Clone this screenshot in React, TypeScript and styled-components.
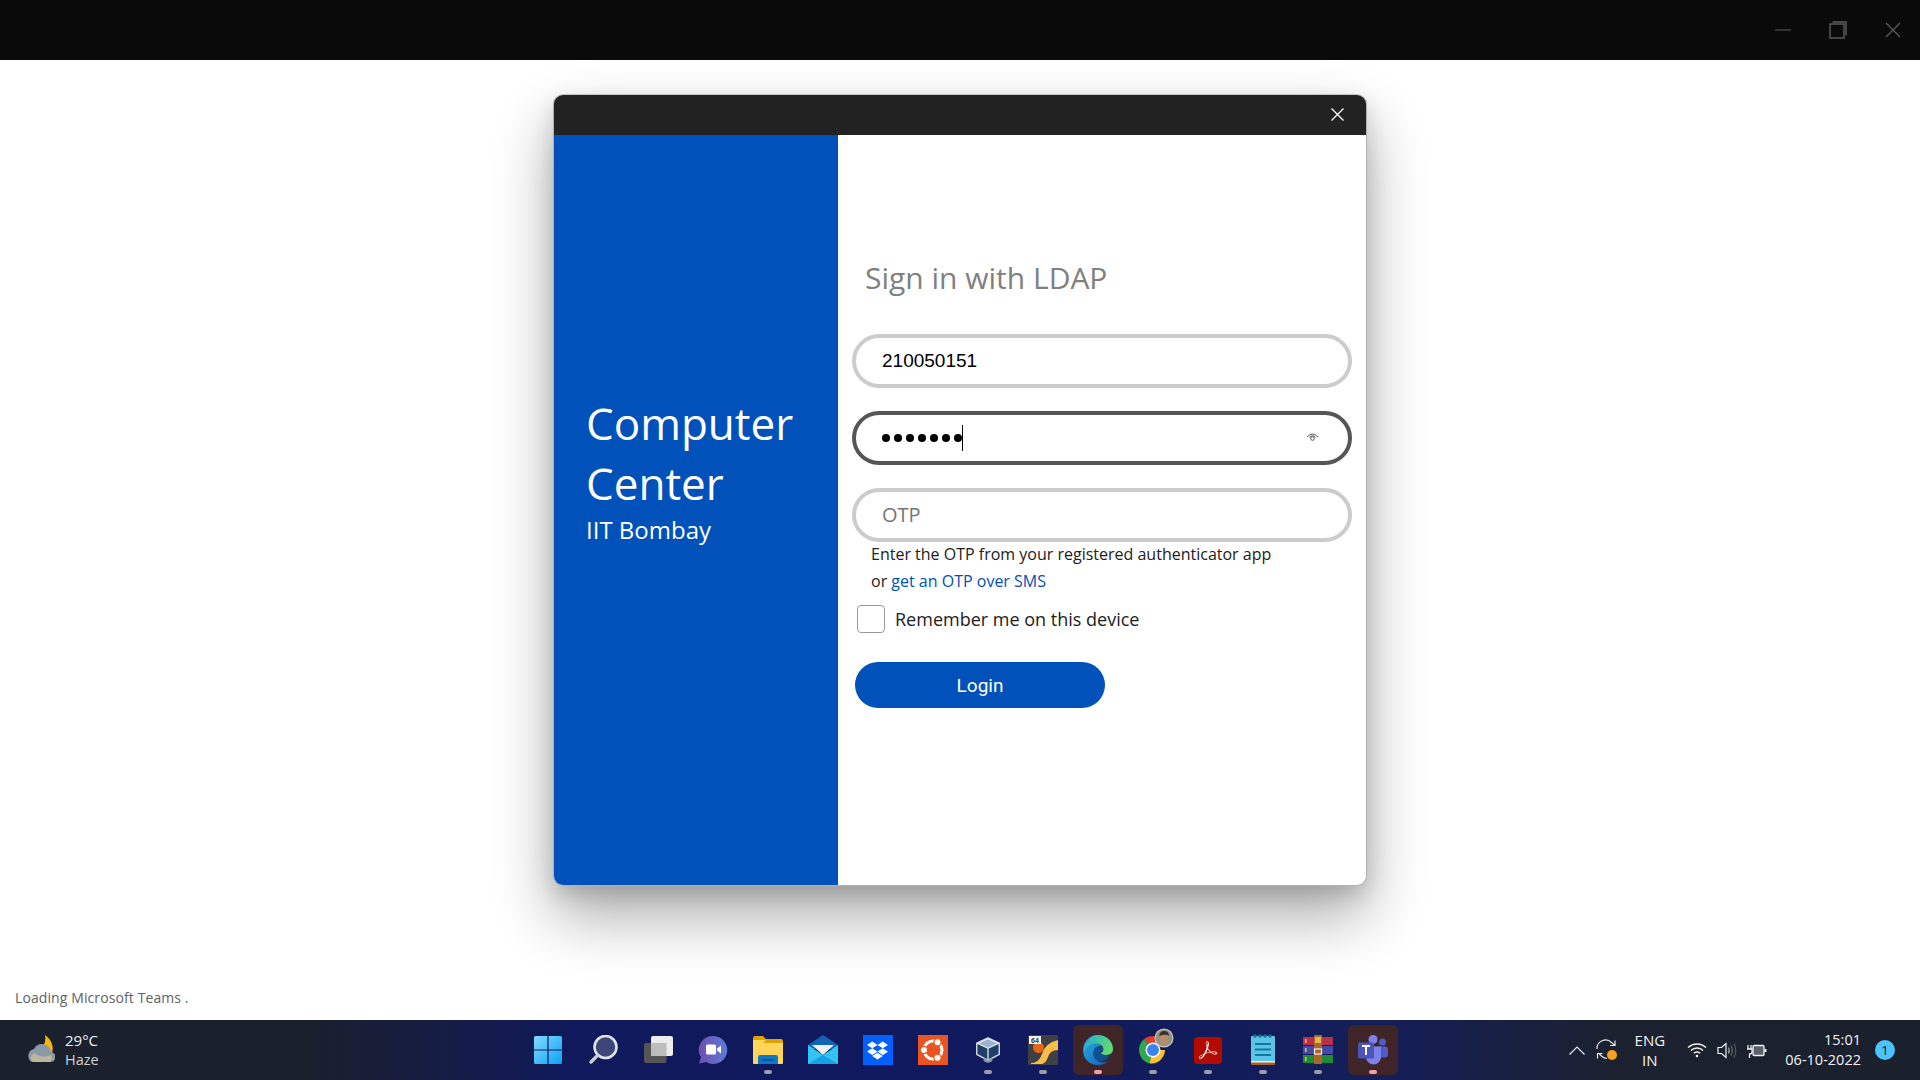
import styled, { createGlobalStyle } from 'styled-components';
import { FaDropbox } from 'react-icons/fa';
import { SiAdobeacrobatreader } from 'react-icons/si';

const GlobalStyle = createGlobalStyle`
  html, body, #root { margin: 0; padding: 0; height: 100%; }
  body { font-family: "Open Sans", "Liberation Sans", sans-serif; background: #fff; overflow: hidden; }
  * { box-sizing: border-box; }
`;

const Page = styled.div`
  width: 1920px;
  height: 1080px;
  display: flex;
  flex-direction: column;
`;

// Window chrome
const TitleBar = styled.div`
  height: 60px;
  flex: none;
  background: #0a0a0a;
  display: flex;
  justify-content: flex-end;
  align-items: center;
`;

const WinButton = styled.div`
  width: 55px;
  height: 60px;
  display: flex;
  align-items: center;
  justify-content: center;
  color: #5c5c5c;
`;

const Main = styled.main`
  flex: 1;
  display: flex;
  flex-direction: column;
  align-items: center;
  padding-top: 34px;
  background: #fff;
`;

// Modal
const Modal = styled.div`
  width: 814px;
  height: 792px;
  display: flex;
  flex-direction: column;
  border-radius: 10px;
  overflow: hidden;
  background: #fff;
  border: 1px solid #b0b0b0;
  border-top-color: #c8c8c8;
  box-shadow: 0 30px 60px rgba(0, 0, 0, 0.33), 0 8px 20px rgba(0, 0, 0, 0.14);
`;

const ModalHeader = styled.div`
  height: 40px;
  flex: none;
  background: #222;
  display: flex;
  justify-content: flex-end;
  align-items: center;
  padding: 0 22px 2px 0;
  color: #fff;
`;

const ModalBody = styled.div`
  flex: 1;
  display: flex;
`;

const BrandPanel = styled.aside`
  width: 284px;
  flex: none;
  background: #0051b9;
  color: #fff;
  padding: 258px 0 0 32px;
`;

const BrandTitle = styled.h1`
  margin: 0;
  font-size: 44px;
  font-weight: 400;
  line-height: 60px;
`;

const BrandSub = styled.div`
  font-size: 24px;
  line-height: 32px;
  margin-top: 1px;
`;

const FormPanel = styled.section`
  flex: 1;
  padding: 118px 14px 0 14px;
`;

const Heading = styled.h2`
  margin: 0 0 31px 13px;
  font-size: 30px;
  font-weight: 400;
  line-height: 50px;
  color: #808080;
`;

const Field = styled.div<{ $active?: boolean }>`
  width: 500px;
  height: 54px;
  border: 4px solid ${(p) => (p.$active ? '#555' : '#ccc')};
  border-radius: 27px;
  display: flex;
  align-items: center;
  justify-content: space-between;
  padding: 0 29px 0 26px;
  margin-bottom: 23px;
  font-family: "Liberation Sans", sans-serif;
  font-size: 19px;
  color: #000;
`;

const Placeholder = styled.span`
  font-family: "Open Sans", sans-serif;
  font-size: 20px;
  margin-top: -2px;
  color: #757575;
`;

const Dots = styled.span`
  display: flex;
  align-items: center;
  gap: 4px;
  height: 26px;
  border-right: 1px solid #000;
`;

const Dot = styled.i`
  width: 8px;
  height: 8px;
  border-radius: 50%;
  background: #000;
`;

const Help = styled.p`
  margin: -24px 0 0 19px;
  font-size: 16px;
  line-height: 27px;
  color: #212121;
`;

const HelpLink = styled.a`
  color: #0051b9;
  text-decoration: none;
`;

const RememberRow = styled.label`
  display: flex;
  align-items: center;
  gap: 10px;
  margin: 10px 0 0 5px;
  font-size: 18px;
  color: #212121;
`;

const CheckBox = styled.span`
  width: 28px;
  height: 28px;
  border: 1px solid #999;
  border-radius: 4px;
  background: #fff;
`;

const LoginButton = styled.button`
  display: block;
  width: 250px;
  height: 46px;
  margin: 29px 0 0 3px;
  border: none;
  border-radius: 23px;
  background: #0051b9;
  color: #fff;
  font-family: Roboto, sans-serif;
  font-size: 19px;
`;

const LoadingText = styled.div`
  align-self: flex-start;
  margin-top: auto;
  margin-left: 15px;
  margin-bottom: 12px;
  font-size: 14px;
  line-height: 20px;
  letter-spacing: 0.1px;
  color: #616161;
`;

// Taskbar
const Taskbar = styled.footer`
  height: 60px;
  flex: none;
  display: grid;
  grid-template-columns: 1fr auto 1fr;
  align-items: center;
  color: #fff;
  background: linear-gradient(90deg, #1b202d 0, #1b202d 16%, #10195c 30%, #10195e 50%, #141e58 72%, #1b212f 84%, #1b202d 100%);
`;

const Weather = styled.div`
  display: flex;
  align-items: center;
  gap: 10px;
  padding-left: 25px;
`;

const TwoLines = styled.div<{ $align?: string }>`
  display: flex;
  flex-direction: column;
  align-items: ${(p) => p.$align || 'flex-start'};
  font-size: 15px;
  line-height: 20px;
  color: #f2f2f2;
`;

const Clock = styled(TwoLines)`
  margin-left: 11px;
  font-size: 14.5px;
`;

const Muted = styled.span`
  font-size: 14.5px;
  color: #cfd1d5;
`;

const Apps = styled.div`
  display: flex;
  gap: 5px;
`;

const AppCell = styled.div<{ $open?: boolean }>`
  position: relative;
  width: 50px;
  height: 50px;
  border-radius: 6px;
  display: flex;
  align-items: center;
  justify-content: center;
  background: ${(p) => (p.$open ? '#402528' : 'transparent')};
`;

const Indicator = styled.span<{ $pink?: boolean }>`
  position: absolute;
  left: 21px;
  bottom: 1px;
  width: 8px;
  height: 4px;
  border-radius: 2px;
  background: ${(p) => (p.$pink ? '#f2a0aa' : '#9a9da8')};
`;

const DropboxTile = styled.div`
  width: 30px;
  height: 30px;
  background: #0061fe;
  color: #fff;
  display: flex;
  align-items: center;
  justify-content: center;
  font-size: 21px;
`;

const AcrobatTile = styled.div`
  width: 28px;
  height: 27px;
  border-radius: 4px;
  background: #b30b00;
  color: #fff;
  display: flex;
  align-items: center;
  justify-content: center;
  font-size: 18px;
`;

const Tray = styled.div`
  display: flex;
  justify-content: flex-end;
  align-items: center;
  padding-right: 25px;
`;

const TrayIcon = styled.div<{ $w: number }>`
  width: ${(p) => p.$w}px;
  display: flex;
  justify-content: center;
  align-items: center;
`;

const Badge = styled.div`
  width: 20px;
  height: 20px;
  margin-left: 14px;
  border-radius: 50%;
  background: #4cc2ff;
  color: #10202c;
  font-size: 13px;
  line-height: 20px;
  text-align: center;
`;

const ChromeSvg = styled.svg`
  overflow: visible;
`;

// Icons
const WinStart = () => (
  <svg width="30" height="30" viewBox="0 0 30 30">
    <defs>
      <linearGradient id="wg" x1="0" y1="0" x2="1" y2="1">
        <stop offset="0" stopColor="#7fdcff" />
        <stop offset="1" stopColor="#0f9ff5" />
      </linearGradient>
    </defs>
    <path fill="url(#wg)" d="M1 2.5Q1 1 2.5 1H14.4V14.4H1zM15.6 1H27.5Q29 1 29 2.5V14.4H15.6zM1 15.6H14.4V29H2.5Q1 29 1 27.5zM15.6 15.6H29V27.5Q29 29 27.5 29H15.6z" />
  </svg>
);

const SearchIcon = () => (
  <svg width="30" height="30" viewBox="0 0 30 30">
    <circle cx="17.5" cy="12" r="11" fill="#3d4678" stroke="#dfe3ea" strokeWidth="2.6" />
    <path d="M9.5 20.5 3 27" stroke="#c9ced8" strokeWidth="3.4" strokeLinecap="round" />
  </svg>
);

const TaskViewIcon = () => (
  <svg width="30" height="30" viewBox="0 0 30 30">
    <rect x="1" y="8" width="22.5" height="20" rx="2" fill="#555" />
    <rect x="8" y="1" width="22" height="20" rx="2" fill="#ececec" />
    <rect x="8" y="8" width="15.5" height="13" fill="#bdbdbd" />
  </svg>
);

const ChatIcon = () => (
  <svg width="30" height="30" viewBox="0 0 30 30">
    <defs>
      <linearGradient id="cg" x1="0" y1="0" x2="1" y2="0">
        <stop offset="0" stopColor="#6d4fb0" />
        <stop offset="1" stopColor="#5d7bd8" />
      </linearGradient>
    </defs>
    <path fill="url(#cg)" d="M15.5 1A14 14 0 1 1 8 27L1.5 28.5Q1 26 3 22.5A14 14 0 0 1 15.5 1Z" />
    <rect x="8" y="9.5" width="10" height="10" rx="1.5" fill="#fff" />
    <path d="M19 13.5 23 10.5V18.5L19 15.5Z" fill="#fff" />
  </svg>
);

const ExplorerIcon = () => (
  <svg width="30" height="30" viewBox="0 0 30 30">
    <path d="M0 3Q0 1 2 1H10L13 4H28Q30 4 30 6V12H0Z" fill="#dfa200" />
    <path d="M0 5H13L10 8H30V28Q30 29 29 29H1Q0 29 0 28Z" fill="#ffd659" />
    <path d="M5 29V22Q5 20 7 20H23Q25 20 25 22V29Z" fill="#0d78c8" />
    <rect x="9" y="24" width="12" height="1.6" fill="#0a4f8f" />
  </svg>
);

const MailIcon = () => (
  <svg width="30" height="30" viewBox="0 0 30 30">
    <path d="M0 10 15 0 30 10V14H0Z" fill="#0f64b5" />
    <path d="M4 10H26L15 20Z" fill="#f0f0f0" />
    <path d="M0 10 15 20 30 10V29H0Z" fill="#32c5f4" />
    <path d="M0 29 15 20 30 29Z" fill="#17a0e4" />
  </svg>
);

const UbuntuIcon = () => (
  <svg width="30" height="30" viewBox="0 0 30 30">
    <rect width="30" height="30" fill="#e95420" />
    <circle cx="15" cy="15" r="9" fill="none" stroke="#fff" strokeWidth="3" />
    <circle cx="6" cy="15" r="3.6" fill="#fff" stroke="#e95420" strokeWidth="1.2" />
    <circle cx="19.5" cy="7.2" r="3.6" fill="#fff" stroke="#e95420" strokeWidth="1.2" />
    <circle cx="19.5" cy="22.8" r="3.6" fill="#fff" stroke="#e95420" strokeWidth="1.2" />
  </svg>
);

const VBoxIcon = () => (
  <svg width="26" height="30" viewBox="0 0 30 32">
    <path d="M15 2 28 8V21L15 28 2 21V8Z" fill="#1f3f68" stroke="#d5deea" strokeWidth="1.6" strokeLinejoin="round" />
    <path d="M15 3 27 8.5 15 14 3 8.5Z" fill="#9ab4cf" stroke="#e6ecf3" strokeWidth="1.4" strokeLinejoin="round" />
    <path d="M15 14V28" stroke="#d5deea" strokeWidth="1.6" />
    <path d="M10 25 15 28 20 25V29L15 31 10 29Z" fill="#8a93a0" />
  </svg>
);

const SixtyFourIcon = () => (
  <svg width="30" height="30" viewBox="0 0 30 30">
    <rect width="30" height="30" rx="1" fill="#3f3f46" />
    <path d="M3 28Q11 28 14 19 17 8 30 5V15Q22 15 20 22 18 28 14 29H3Z" fill="#fbbd4a" />
    <circle cx="10.5" cy="12.5" r="5.5" fill="#e8641b" />
    <rect x="1" y="1" width="12" height="8" fill="#f4f4f4" />
    <text x="7" y="7.6" textAnchor="middle" fontSize="7" fontWeight="700" fontFamily="Liberation Sans, sans-serif" fill="#333">64</text>
  </svg>
);

const EdgeIcon = () => (
  <svg width="30" height="30" viewBox="0 0 30 30">
    <defs>
      <linearGradient id="eg" x1="0" y1="0" x2="1" y2="0.4">
        <stop offset="0" stopColor="#1fa6dc" />
        <stop offset="1" stopColor="#5fdc70" />
      </linearGradient>
      <linearGradient id="eb" x1="0" y1="0" x2="1" y2="1">
        <stop offset="0" stopColor="#2cb0e6" />
        <stop offset="1" stopColor="#0b5fb8" />
      </linearGradient>
    </defs>
    <path fill="url(#eb)" d="M15 0A15 15 0 0 0 0 15C0 24 7 30 15 30Q21 30 26 26 20 29 15 26 9 22 11 16 13 11 20 10 12 2 15 0Z" />
    <path fill="url(#eg)" d="M15 0C23 0 30 6 30 14 30 19 26 20 22.5 20 19 20 17.5 19 18 18 22 16 21 10 15 8.5 9 7 3 11 1 17 1 7 8 0 15 0Z" />
    <path fill="#10508e" d="M11 15C12 11 16 10.5 19 12 21 14 20 17 18 18 17.5 19 19 20 22.5 20 24 20 26 19.6 27 18.5 25 25 19 27.5 15 26 10 24 10 19 11 15Z" />
  </svg>
);

const ChromeIcon = () => (
  <ChromeSvg width="28" height="28" viewBox="0 0 28 28">
    <path d="M14 14 5 3.3A14 14 0 0 1 26 7H14Z" fill="#e33b2e" />
    <path d="M14 14 5 3.3A14 14 0 0 0 10.5 27.5L14 21Z" fill="#2fa84f" />
    <path d="M14 14H26A14 14 0 0 1 10.5 27.5Z" fill="#fbc02d" />
    <circle cx="14" cy="14" r="7.5" fill="#fff" />
    <circle cx="14" cy="14" r="6" fill="#3c82f0" />
    <circle cx="25" cy="2" r="9.5" fill="#cfcfc4" />
    <circle cx="25" cy="2" r="8.5" fill="#8f9484" />
    <ellipse cx="25" cy="3" rx="4.5" ry="6" fill="#b98a6c" />
    <path d="M20 0Q21-5 25-5 30-5 30 0 27-2.500 20 0Z" fill="#3a3129" />
  </ChromeSvg>
);

const NotepadIcon = () => (
  <svg width="26" height="32" viewBox="0 0 26 32">
    <path d="M2 2H24Q25 2 25 3V28H1V3Q1 2 2 2Z" fill="#5cc4e6" />
    <path d="M1 28H25V30Q25 31 24 31H2Q1 31 1 30Z" fill="#a8602c" />
    <rect x="1" y="27" width="24" height="1.5" fill="#eee" />
    <g fill="#12779e">
      <circle cx="5" cy="2" r="1.8" />
      <circle cx="10" cy="2" r="1.8" />
      <circle cx="15" cy="2" r="1.8" />
      <circle cx="20" cy="2" r="1.8" />
      <rect x="5" y="9" width="16" height="2" />
      <rect x="5" y="14.5" width="16" height="2" />
      <rect x="5" y="20" width="16" height="2" />
    </g>
  </svg>
);

const WinrarIcon = () => (
  <svg width="30" height="30" viewBox="0 0 30 30">
    <rect y="2" width="30" height="8" fill="#b8314a" />
    <rect y="11" width="30" height="8" fill="#4348ac" />
    <rect y="20" width="30" height="8" fill="#1f8a3a" />
    <rect x="11" y="0" width="8" height="29" fill="#a8662a" />
    <rect x="12" y="2" width="6" height="6" fill="#e5b84e" />
    <rect x="11.5" y="14" width="7" height="5" fill="none" stroke="#eee" strokeWidth="1.2" />
    <g fill="#f5c13a">
      <rect x="2" y="4" width="1.5" height="4" />
      <rect x="2" y="13" width="1.5" height="4" />
      <rect x="2" y="22" width="1.5" height="4" />
    </g>
  </svg>
);

const TeamsIcon = () => (
  <svg width="30" height="32" viewBox="0 0 30 32">
    <circle cx="24.5" cy="8" r="3.5" fill="#5059c9" />
    <rect x="19" y="12.5" width="11" height="11" rx="3" fill="#5059c9" />
    <circle cx="15" cy="5.5" r="4.5" fill="#7b83eb" />
    <path d="M8 12.5H23V23A7.5 7.5 0 0 1 8 23Z" fill="#7b83eb" />
    <rect x="0" y="8.5" width="16" height="16" rx="1.5" fill="#4b53bc" />
    <path d="M4 12H12M8 12V21" stroke="#fff" strokeWidth="2" />
  </svg>
);

const WeatherIcon = () => (
  <svg width="30" height="30" viewBox="0 0 30 30">
    <path d="M20 0C27 5 29 12 27 18L17 12C20 9 21 5 20 0Z" fill="#f6b40e" />
    <path d="M7 27H25A5 5 0 0 0 26 17 9 9 0 0 0 9 14 7 7 0 0 0 7 27Z" fill="#8b98a6" />
    <path d="M8 27H25A5 5 0 0 0 26 20Q17 24 9 18 3 22 8 27Z" fill="#cfc49b" opacity="0.7" />
  </svg>
);

const App = () => {
  const apps: { icon: React.ReactNode; dot?: boolean; open?: boolean }[] = [
    { icon: <WinStart /> },
    { icon: <SearchIcon /> },
    { icon: <TaskViewIcon /> },
    { icon: <ChatIcon /> },
    { icon: <ExplorerIcon />, dot: true },
    { icon: <MailIcon /> },
    { icon: <DropboxTile><FaDropbox /></DropboxTile> },
    { icon: <UbuntuIcon /> },
    { icon: <VBoxIcon />, dot: true },
    { icon: <SixtyFourIcon />, dot: true },
    { icon: <EdgeIcon />, dot: true, open: true },
    { icon: <ChromeIcon />, dot: true },
    { icon: <AcrobatTile><SiAdobeacrobatreader /></AcrobatTile>, dot: true },
    { icon: <NotepadIcon />, dot: true },
    { icon: <WinrarIcon />, dot: true },
    { icon: <TeamsIcon />, dot: true, open: true },
  ];

  return (
    <Page>
      <GlobalStyle />
      <TitleBar>
        <WinButton>
          <svg width="16" height="16" viewBox="0 0 16 16"><path d="M0 8H16" stroke="currentColor" /></svg>
        </WinButton>
        <WinButton>
          <svg width="18" height="18" viewBox="0 0 18 18" fill="none" stroke="currentColor" strokeWidth="1.4">
            <rect x="1" y="3" width="14" height="14" />
            <path d="M3.5 1H17V14.5" />
          </svg>
        </WinButton>
        <WinButton>
          <svg width="16" height="16" viewBox="0 0 16 16"><path d="M1 1 15 15M15 1 1 15" stroke="currentColor" strokeWidth="1.2" /></svg>
        </WinButton>
      </TitleBar>

      <Main>
        <Modal>
          <ModalHeader>
            <svg width="13" height="13" viewBox="0 0 13 13"><path d="M.5.5 12.5 12.5M12.5.5 .5 12.5" stroke="currentColor" strokeWidth="1.3" /></svg>
          </ModalHeader>
          <ModalBody>
            <BrandPanel>
              <BrandTitle>Computer<br />Center</BrandTitle>
              <BrandSub>IIT Bombay</BrandSub>
            </BrandPanel>
            <FormPanel>
              <Heading>Sign in with LDAP</Heading>
              <Field>210050151</Field>
              <Field $active>
                <Dots>{[0, 1, 2, 3, 4, 5, 6].map((i) => <Dot key={i} />)}</Dots>
                <svg width="13" height="10" viewBox="0 0 13 10" fill="none" stroke="#555" strokeWidth="1">
                  <path d="M1 4Q6.5-2 12 4" />
                  <path d="M3.5 4.500Q6.5 1 9.5 4.500" />
                  <circle cx="6.5" cy="5.5" r="1.8" />
                </svg>
              </Field>
              <Field><Placeholder>OTP</Placeholder></Field>
              <Help>
                Enter the OTP from your registered authenticator app<br />
                or <HelpLink href="#">get an OTP over SMS</HelpLink>
              </Help>
              <RememberRow>
                <CheckBox />
                Remember me on this device
              </RememberRow>
              <LoginButton>Login</LoginButton>
            </FormPanel>
          </ModalBody>
        </Modal>
        <LoadingText>Loading Microsoft Teams .</LoadingText>
      </Main>

      <Taskbar>
        <Weather>
          <WeatherIcon />
          <TwoLines>
            <span>29°C</span>
            <Muted>Haze</Muted>
          </TwoLines>
        </Weather>
        <Apps>
          {apps.map((app, i) => (
            <AppCell key={i} $open={app.open}>
              {app.icon}
              {app.dot && <Indicator $pink={app.open} />}
            </AppCell>
          ))}
        </Apps>
        <Tray>
          <TrayIcon $w={29}>
            <svg width="16" height="9" viewBox="0 0 16 9" fill="none" stroke="#e8e8e8" strokeWidth="1.2"><path d="M.5 8.5 8 1l7.5 7.5" /></svg>
          </TrayIcon>
          <TrayIcon $w={31}>
            <svg width="22" height="22" viewBox="0 0 22 22" fill="none" stroke="#e8e8e8" strokeWidth="1.2">
              <path d="M1 10A8.5 8.5 0 0 1 15.5 3.5L19 6.5M19 1.5V6.5H14" />
              <path d="M3 14.5 6 17.5A8 8 0 0 0 11 19.5M1.5 19.5V14.5H6.5" />
              <circle cx="16" cy="16" r="5" fill="#f9a11b" stroke="none" />
            </svg>
          </TrayIcon>
          <TrayIcon $w={55}>
            <TwoLines $align="center">
              <span>ENG</span>
              <span>IN</span>
            </TwoLines>
          </TrayIcon>
          <TrayIcon $w={39}>
            <svg width="20" height="16" viewBox="0 0 20 16" fill="none" stroke="#f2f2f2" strokeWidth="1.5">
              <path d="M1 5.5A13 13 0 0 1 19 5.5M4 8.5A8.5 8.5 0 0 1 16 8.5M6.8 11.3A4.5 4.5 0 0 1 13.2 11.3" />
              <circle cx="10" cy="14" r="1.3" fill="#f2f2f2" stroke="none" />
            </svg>
          </TrayIcon>
          <TrayIcon $w={22}>
            <svg width="21" height="17" viewBox="0 0 21 17" fill="none" strokeWidth="1.2">
              <path d="M1 5.5H4.5L9 1.5V15.5L4.5 11.5H1Z" stroke="#f2f2f2" />
              <path d="M11.5 5.5Q13 8.5 11.5 11.5" stroke="#aaa" />
              <path d="M14 3.5Q16.5 8.5 14 13.5" stroke="#666" />
              <path d="M17 1.5Q20.5 8.5 17 15.5" stroke="#555" />
            </svg>
          </TrayIcon>
          <TrayIcon $w={36}>
            <svg width="21" height="17" viewBox="0 0 21 17" fill="none" stroke="#f2f2f2" strokeWidth="1.3">
              <path d="M2 3V7M5 3V7M1 7H6V10Q6 12 3.5 12V16" />
              <rect x="7" y="3.5" width="11" height="10" rx="1" fill="#f2f2f2" fillOpacity="0.3" />
              <path d="M19.5 7V10" strokeWidth="2" />
            </svg>
          </TrayIcon>
          <Clock $align="flex-end">
            <span>15:01</span>
            <span>06-10-2022</span>
          </Clock>
          <Badge>1</Badge>
        </Tray>
      </Taskbar>
    </Page>
  );
};

export default App;
